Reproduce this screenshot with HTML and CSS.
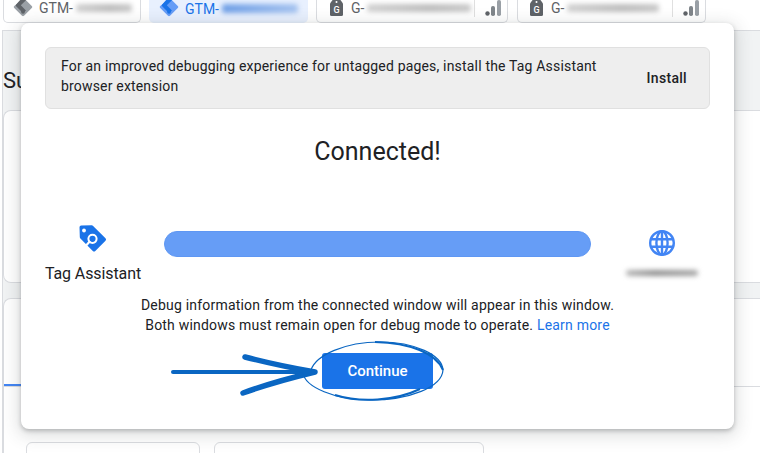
FILE: index.html
```html
<!DOCTYPE html>
<html lang="en">
<head>
<meta charset="utf-8">
<title>Tag Assistant</title>
<link rel="stylesheet" href="styles.css">
</head>
<body>
<div class="page">
  <header class="tabs">
    <div class="tab tab-a">
      <svg class="tab-icon" viewBox="0 0 24 24"><path fill="#9aa0a6" d="M13.2 1.500 22.500 10.800a1.700 1.700 0 0 1 0 2.400l-9.300 9.300a1.700 1.700 0 0 1-2.400 0L1.500 13.200a1.700 1.700 0 0 1 0-2.400z"/><path fill="#5f6368" d="M7.500 4.800 10.800 1.500a1.700 1.700 0 0 1 2.400 0l2.300 2.300-6.100 6.100 6.100 6.200-3.300 3.300-8.400-8.300a1.500 1.500 0 0 1 0-2.200z"/><circle cx="12" cy="17.700" r="2.300" fill="#5f6368"/></svg>
      <span class="tab-label">GTM-</span><span class="smear smear-grey w-a"></span>
    </div>
    <div class="tab tab-active">
      <svg class="tab-icon" viewBox="0 0 24 24"><path fill="#669df6" d="M13.2 1.500 22.500 10.800a1.700 1.700 0 0 1 0 2.400l-9.300 9.300a1.700 1.700 0 0 1-2.400 0L1.500 13.200a1.700 1.700 0 0 1 0-2.400z"/><path fill="#1a73e8" d="M7.500 4.800 10.800 1.500a1.700 1.700 0 0 1 2.400 0l2.300 2.300-6.100 6.100 6.100 6.200-3.300 3.300-8.400-8.300a1.500 1.500 0 0 1 0-2.200z"/><circle cx="12" cy="17.700" r="2.300" fill="#1a73e8"/></svg>
      <span class="tab-label tab-label-active">GTM-</span><span class="smear smear-blue w-b"></span>
    </div>
    <div class="tab tab-c">
      <svg class="tag-g" viewBox="0 0 13 18"><path fill="#5f6368" d="M4 0h5l4 5.500V16.500A1.500 1.500 0 0 1 11.500 18h-10A1.500 1.500 0 0 1 0 16.500V5.500z"/><circle cx="6.500" cy="4" r="1" fill="#fff"/><text x="6.500" y="14.500" class="tag-letter">G</text></svg>
      <span class="tab-label">G-</span><span class="smear smear-grey w-c"></span>
      <span class="tab-sep"></span>
      <svg class="bars" viewBox="0 0 16 16"><circle cx="2.500" cy="13.500" r="2.200" fill="#5f6368"/><rect x="6" y="6" width="4" height="10" rx="1.800" fill="#80868b"/><rect x="12" y="0" width="4" height="16" rx="1.800" fill="#9aa0a6"/></svg>
    </div>
    <div class="tab tab-d">
      <svg class="tag-g" viewBox="0 0 13 18"><path fill="#5f6368" d="M4 0h5l4 5.500V16.500A1.500 1.500 0 0 1 11.500 18h-10A1.500 1.500 0 0 1 0 16.500V5.500z"/><circle cx="6.500" cy="4" r="1" fill="#fff"/><text x="6.500" y="14.500" class="tag-letter">G</text></svg>
      <span class="tab-label">G-</span><span class="smear smear-grey w-d"></span>
      <span class="tab-sep"></span>
      <svg class="bars" viewBox="0 0 16 16"><circle cx="2.500" cy="13.500" r="2.200" fill="#5f6368"/><rect x="6" y="6" width="4" height="10" rx="1.800" fill="#80868b"/><rect x="12" y="0" width="4" height="16" rx="1.800" fill="#9aa0a6"/></svg>
    </div>
  </header>

  <main class="workspace">
    <h2 class="summary-title">Su</h2>
    <section class="panel panel-top"></section>
    <section class="panel panel-bottom">
      <div class="panel-head"><span class="panel-ink"></span></div>
      <div class="chips">
        <span class="chip chip-a"></span>
        <span class="chip chip-b"></span>
      </div>
    </section>
  </main>

  <div class="modal">
    <div class="notice">
      <p class="notice-text">For an improved debugging experience for untagged pages, install the Tag Assistant browser extension</p>
      <span class="notice-action">Install</span>
    </div>
    <h1 class="modal-title">Connected!</h1>
    <div class="connection">
      <div class="endpoint endpoint-left">
        <svg class="ta-icon" viewBox="0 0 28 28"><path fill="#1a73e8" d="M2.200 0.600 12.600 0.300a2 2 0 0 1 1.500.6L26.500 13.300a1.800 1.800 0 0 1 0 2.500L16.300 26a1.800 1.800 0 0 1-2.500 0L1.400 13.600a2 2 0 0 1-.6-1.500L.5 2.300A1.700 1.700 0 0 1 2.200.6z"/><circle cx="5" cy="5.500" r="1.900" fill="#fff"/><circle cx="13.500" cy="13.800" r="4.100" fill="none" stroke="#fff" stroke-width="2"/><path d="M10.500 16.800 7.800 19.800" stroke="#fff" stroke-width="2.200" stroke-linecap="round"/></svg>
        <span class="endpoint-name">Tag Assistant</span>
      </div>
      <div class="progress"></div>
      <div class="endpoint endpoint-right">
        <svg class="globe" viewBox="0 0 26 26" fill="none" stroke="#4285f4" stroke-width="2.400"><circle cx="13" cy="13" r="11.800"/><ellipse cx="13" cy="13" rx="5.600" ry="11.800"/><path d="M2 9.200h22M2 16.800h22M13 1.500v23"/></svg>
        <span class="smear smear-host"></span>
      </div>
    </div>
    <p class="info">Debug information from the connected window will appear in this window.<br>Both windows must remain open for debug mode to operate. <a class="info-link" href="#">Learn more</a></p>
    <div class="actions">
      <button class="continue" type="button">Continue</button>
      <svg class="scribble" viewBox="0 0 290 70" fill="none" stroke="#0a66c2">
        <path stroke-width="4" stroke-linecap="round" stroke-dasharray="1.500 .6" d="M3 35H130"/>
        <path stroke-width="4" d="M100 35C120 35 135 35 146 35"/>
        <path stroke-width="5.500" stroke-linecap="round" stroke-linejoin="round" d="M75 20C98 26 122 31 145 35 120 41 95 48 73 56"/>
        <path stroke-width="1.200" d="M141 33C146 18 175 5 210 5 245 5 272 18 273 33 272 50 240 63 200 63 165 63 135 50 133 36"/>
        <path stroke-width="2" d="M205 5C240 6 266 16 273 33M165 58C190 66 225 64 250 52"/>
      </svg>
    </div>
  </div>
</div>
</body>
</html>
```
FILE: styles.css
```css
* { box-sizing: border-box; }
html, body { margin: 0; padding: 0; }
body { font-family: Roboto, "Liberation Sans", sans-serif; color: #202124; background: #fff; }

.page { position: relative; width: 760px; height: 453px; overflow: hidden; background: #fff; display: flex; flex-direction: column; }

/* Tabs */
.tabs { height: 30px; padding: 0 0 0 3px; display: flex; flex: none; background: #fff; }
.tab { height: 23px; display: flex; align-items: center; padding: 0 0 6px 9px; border: 1px solid #dadce0; border-top: 0; border-radius: 0 0 5px 5px; color: #5f6368; font-size: 14px; }
.tab-a { width: 138px; margin-right: 8px; }
.tab-active { width: 159px; margin-right: 8px; border: 0; background: #e8f0fe; padding-left: 10px; }
.tab-c { width: 192px; margin-right: 9px; padding-left: 13px; }
.tab-d { width: 189px; padding-left: 12px; }
.tab-icon { width: 20px; height: 20px; flex: none; margin-right: 6px; margin-top: -3px; }
.tab-label { flex: none; }
.tab-label-active { color: #1a73e8; }
.tag-g { width: 13px; height: 18px; flex: none; margin-right: 8px; margin-top: -2px; }
.tag-letter { font: 500 9px Roboto, sans-serif; fill: #fff; text-anchor: middle; }
.tab-sep { width: 1px; height: 17px; background: #e0e0e0; margin-left: auto; flex: none; }
.bars { width: 16px; height: 16px; flex: none; margin: 0 6px 0 10px; }

.smear { display: block; flex: none; filter: blur(2.500px); border-radius: 3px; }
.smear-grey { height: 8px; margin-left: 3px; background: linear-gradient(90deg, #d0d0d0, #bcbcbc 60%, #c8c8c8); }
.smear-blue { height: 9px; margin-left: 3px; background: linear-gradient(90deg, #6f9fe6, #a4c2ef); }
.w-a { width: 56px; }
.w-b { width: 76px; }
.w-c { width: 104px; }
.w-d { width: 92px; }

/* Background workspace */
.workspace { flex: 1; min-height: 0; margin-left: 2px; background: #f1f3f4; border-left: 1px solid #dadce0; border-top: 1px solid #dadce0; display: flex; flex-direction: column; }
.summary-title { margin: 37px 0 0 0; height: 42px; flex: none; font-size: 22px; line-height: 26px; font-weight: 400; white-space: nowrap; }
.panel { background: #fff; border: 1px solid #dadce0; border-right: 0; border-radius: 8px 0 0 8px; flex: none; }
.panel-top { height: 173px; }
.panel-bottom { margin-top: 15px; flex: 1; border-bottom: 0; border-radius: 8px 0 0 0; }
.panel-head { height: 88px; display: flex; align-items: flex-end; border-bottom: 1px solid #dadce0; }
.panel-ink { display: block; width: 18px; height: 2px; background: #4285f4; }
.chips { display: flex; gap: 14px; padding: 55px 0 0 22px; }
.chip { display: block; height: 20px; background: #fff; border: 1px solid #dadce0; border-radius: 6px; }
.chip-a { width: 174px; }
.chip-b { width: 270px; }

/* Modal */
.modal { position: absolute; left: 21px; top: 23px; width: 713px; height: 406px; padding: 24px; background: #fff; border-radius: 8px; box-shadow: 0 2px 4px rgba(60,64,67,.3), 0 4px 16px 4px rgba(60,64,67,.15); }
.notice { height: 62px; display: flex; align-items: center; justify-content: space-between; padding: 0 22px 0 15px; background: #eeeeee; border: 1px solid #e0e0e0; border-radius: 6px; }
.notice-text { margin: 0 0 4px; width: 545px; font-size: 14px; line-height: 20px; letter-spacing: .18px; color: #202124; }
.notice-action { font-size: 14px; font-weight: 500; letter-spacing: .3px; color: #202124; }
.modal-title { margin: 27px 0 0; height: 32px; font-size: 25px; line-height: 32px; font-weight: 400; text-align: center; }

.connection { margin-top: 52px; display: flex; align-items: flex-start; }
.endpoint { display: flex; flex-direction: column; align-items: center; flex: none; }
.endpoint-left { width: 96px; height: 72px; padding-top: 5px; }
.ta-icon { width: 28px; height: 28px; flex: none; }
.endpoint-name { margin-top: 11px; font-size: 16px; line-height: 20px; letter-spacing: -.1px; white-space: nowrap; }
.progress { flex: none; width: 427px; height: 26px; margin: 11px 0 0 23px; background: #669df6; border: 1px solid #5f97f3; border-radius: 13px; }
.endpoint-right { width: 119px; padding-top: 10px; }
.globe { width: 26px; height: 26px; margin-left: 23px; }
.smear-host { width: 72px; height: 6px; margin: 14px 0 0 23px; background: linear-gradient(90deg, #b5b5b5, #8f8f8f 40%, #a5a5a5); }

.info { margin: 3px 0 0; font-size: 14px; line-height: 20px; letter-spacing: .2px; text-align: center; color: #202124; }
.info-link { color: #1a73e8; text-decoration: none; }

.actions { position: relative; margin-top: 18px; display: flex; justify-content: center; }
.continue { width: 111px; height: 36px; border: 0; border-radius: 3px; background: #1a73e8; color: #fff; font: 500 15px Roboto, sans-serif; }
.scribble { position: absolute; left: 125px; top: -16px; width: 290px; height: 70px; }
```
